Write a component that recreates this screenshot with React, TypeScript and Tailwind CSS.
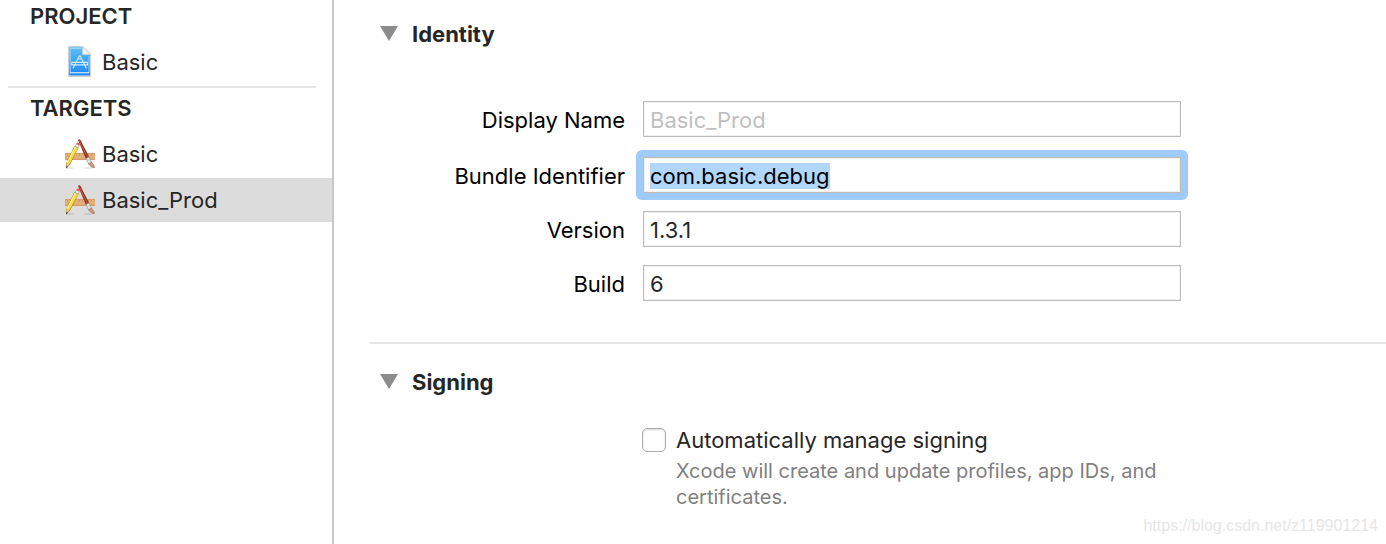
import { useEffect, useRef } from "react";
import type { ReactNode } from "react";

type FieldProps = {
  id: string;
  label: string;
  value?: string;
  placeholder?: string;
  active?: boolean;
};

function ProjectIcon() {
  return (
    <svg aria-hidden="true" className="h-8 w-[30px] shrink-0" viewBox="0 0 30 32">
      <defs>
        <linearGradient id="paper" x1="0" x2="0" y1="0" y2="1">
          <stop offset="0" stopColor="#5cc0f2" />
          <stop offset="1" stopColor="#1a86fb" />
        </linearGradient>
      </defs>
      <path d="M3.500 .5H18L25.700 8.300V30.500H3.500Z" fill="#e4e8ea" stroke="#c3c7ca" strokeWidth=".8" />
      <path d="M4.200 1.300H17.500V8.800H25V29.600H4.200Z" fill="url(#paper)" />
      <path d="M17.700 1L25.300 8.500H17.700Z" fill="#f3f4f4" stroke="#c3c7ca" strokeWidth=".6" />
      <path
        d="M5.300 27V2.500H16.500M24 10V27"
        fill="none"
        stroke="#a5dafb"
        strokeWidth=".8"
      />
      <path d="M5.300 26.800H24" stroke="#fff" strokeWidth="1" />
      <path
        d="M14.200 10L8.200 22M15.200 10L21.200 22M12.800 13H16.600M6.800 16.300H22.500V18.800H6.800Z"
        fill="none"
        stroke="#cfeaff"
        strokeLinecap="round"
        strokeWidth="1.200"
      />
    </svg>
  );
}

function TargetIcon() {
  return (
    <svg aria-hidden="true" className="size-[30px] shrink-0" viewBox="0 0 30 30">
      <ellipse cx="5" cy="29" fill="#000" opacity=".12" rx="4" ry=".8" />
      <ellipse cx="23" cy="29" fill="#000" opacity=".12" rx="5" ry=".8" />
      <path d="M0 14H30V20.800H0Z" fill="#e3ae78" />
      <path d="M0 14.400H30" stroke="#d09a66" strokeWidth=".8" />
      <path d="M0 20.400H30" stroke="#c8925f" strokeWidth=".8" />
      <path
        d="M2.500 15V16.500M5.500 15V16.500M8.500 15V16.500M14.500 15V16.500M17.500 15V16.500M23.500 15V16.500M26.500 15V16.500"
        stroke="#b98857"
        strokeWidth=".6"
      />
      {/* pencil */}
      <path d="M9.600 6.800L13.600 8.800L4.800 26L1 29.500L1.200 24Z" fill="#9a7a22" />
      <path d="M9.900 7.600L13 9.200L4.400 25.600L1.500 24.100Z" fill="#f7dc3a" />
      <path d="M9.900 7.600L10.900 8.100L2.500 24.600L1.500 24.100Z" fill="#fff28a" />
      <path d="M1.600 24.100L4.300 25.500L1.200 29Z" fill="#ecc493" />
      <path d="M1.300 27L2.800 27.700L1 29.600Z" fill="#333" />
      <path d="M10.100 7.400L11.300 5L14.300 6.500L13 8.900Z" fill="#eef0f2" stroke="#8b8f94" strokeWidth=".5" />
      <path d="M11.300 5L12 3.700Q13.800 3 15 5.200L14.300 6.500Z" fill="#ee5252" />
      {/* paintbrush */}
      <path d="M13 1Q14.200 -.5 15.500 1L24.200 18.200L21 20Z" fill="#8c2c1a" />
      <path d="M14.100 1.500L22.500 18.600" stroke="#cd6044" strokeWidth="1" />
      <path d="M21 19.500L23.800 18L26.600 23.300L23.700 25Z" fill="#dfe2e5" stroke="#82868b" strokeWidth=".6" />
      <path d="M23.700 24.800L26.600 23.300Q29.500 26 29.500 28.700Q26 29 23.700 24.800Z" fill="#d39a80" stroke="#a06a55" strokeWidth=".6" />
    </svg>
  );
}

function SidebarRow({ icon, label, selected }: { icon: ReactNode; label: string; selected?: boolean }) {
  return (
    <button
      className={`flex h-11 w-full items-center gap-[7px] pl-[65px] text-left ${selected ? "bg-[#dcdcdc]" : ""}`}
      type="button"
    >
      {icon}
      <span>{label}</span>
    </button>
  );
}

function SectionHeader({ title }: { title: string }) {
  return (
    <h2>
      <button className="flex h-8 items-center gap-3.5 pl-2.5 font-bold" type="button">
        <svg aria-hidden="true" className="h-4 w-[18px]" viewBox="0 0 18 16">
          <path d="M0 0H18L9 15Z" fill="#8c8c8c" />
        </svg>
        {title}
      </button>
    </h2>
  );
}

function Field({ id, label, value, placeholder, active }: FieldProps) {
  const input = useRef<HTMLInputElement>(null);

  useEffect(() => {
    if (active) {
      input.current?.focus();
      input.current?.select();
    }
  }, [active]);

  return (
    <div className="grid grid-cols-[255px_minmax(0,538px)] items-center gap-x-[18px]">
      <label className="pt-0.5 text-right text-black" htmlFor={id}>
        {label}
      </label>
      <div className={active ? "-m-[7px] rounded-md bg-[#9fcbfb] p-[7px]" : ""}>
        <input
          className="block h-9 w-full border border-[#bdbdbd] bg-white px-1.5 pt-0.5 leading-7 shadow-[inset_0_0_0_1px_#f0f0f0] outline-none selection:bg-[#b2d7ff] selection:text-black placeholder:text-[#bfbfbf]"
          defaultValue={value}
          id={id}
          placeholder={placeholder}
          ref={input}
          type="text"
        />
      </div>
    </div>
  );
}

export default function App() {
  return (
    <div className="relative flex min-h-screen bg-white font-['Inter','Liberation_Sans',sans-serif] text-[22px] leading-7 text-[#262626]">
      <aside className="w-[334px] shrink-0 border-r-2 border-[#c8c8c8]">
        <h2 className="flex h-8 items-center pl-[30px] font-semibold">PROJECT</h2>
        <div className="mt-2">
          <SidebarRow icon={<ProjectIcon />} label="Basic" />
        </div>
        <hr className="mt-0.5 mr-4 ml-2 border-t-2 border-[#e4e4e4]" />
        <h2 className="flex h-10 items-center pl-[30px] font-semibold">TARGETS</h2>
        <div className="mt-1 flex flex-col gap-0.5">
          <SidebarRow icon={<TargetIcon />} label="Basic" />
          <SidebarRow icon={<TargetIcon />} label="Basic_Prod" selected />
        </div>
      </aside>

      <main className="min-w-0 flex-1 pl-9">
        <section className="pt-[18px] pb-[41px]">
          <SectionHeader title="Identity" />
          <div className="mt-[51px] flex flex-col gap-5">
            <Field id="display-name" label="Display Name" placeholder="Basic_Prod" />
            <div className="flex flex-col gap-[18px]">
              <Field active id="bundle-id" label="Bundle Identifier" value="com.basic.debug" />
              <Field id="version" label="Version" value="1.3.1" />
              <Field id="build" label="Build" value="6" />
            </div>
          </div>
        </section>

        <section className="border-t-2 border-[#e4e4e4] pt-[22px]">
          <SectionHeader title="Signing" />
          <div className="mt-7 flex gap-2.5 pl-[272px]">
            <input
              aria-describedby="signing-note"
              className="mt-0.5 size-6 shrink-0 appearance-none rounded-[5px] border border-[#adadad] bg-white shadow-[inset_0_1px_2px_#d4d4d4]"
              id="auto-signing"
              type="checkbox"
            />
            <div className="max-w-[510px]">
              <label className="block" htmlFor="auto-signing">
                Automatically manage signing
              </label>
              <p className="mt-1 text-[20px] leading-[26px] text-[#808080]" id="signing-note">
                Xcode will create and update profiles, app IDs, and certificates.
              </p>
            </div>
          </div>
        </section>
      </main>

      <p className="absolute right-2 bottom-1.5 font-['Liberation_Sans',sans-serif] text-base leading-6 text-[#e6e6e6]">
        https://blog.csdn.net/z119901214
      </p>
    </div>
  );
}
